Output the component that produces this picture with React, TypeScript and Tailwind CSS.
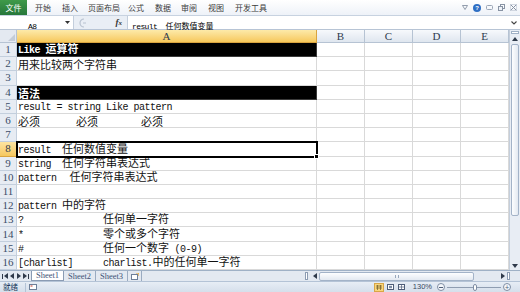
import React from "react";

const cellLatin = "font-['Liberation_Mono',monospace] text-[10px] tracking-[-0.5px] whitespace-pre leading-none";
const cellCjk = "font-['Noto_Sans_CJK_SC',sans-serif] text-[11px] leading-none";
const barLatin = "font-['Liberation_Mono',monospace] text-[8px] tracking-[-0.6px] whitespace-pre leading-none";
const barCjk = "font-['Noto_Sans_CJK_SC',sans-serif] text-[8px] leading-none";

// splits a string into ascii / cjk runs so each gets its own font
function Mixed({ text, bold, bar }: { text: string; bold?: boolean; bar?: boolean }) {
  const parts = text.split(/([\x00-\x7f]+)/).filter(Boolean);
  return (
    <span className="whitespace-nowrap">
      {parts.map((p, i) => {
        const latin = /^[\x00-\x7f]+$/.test(p);
        const base = bar ? (latin ? barLatin : barCjk) : latin ? cellLatin : cellCjk;
        return (
          <span key={i} className={`${base} ${bold ? "font-bold" : ""}`}>
            {p}
          </span>
        );
      })}
    </span>
  );
}

function Two({ a, b }: { a: string; b: string }) {
  return (
    <>
      <span className="inline-block w-[85px]">
        <Mixed text={a} />
      </span>
      <Mixed text={b} />
    </>
  );
}

const rows: { black?: boolean; content?: React.ReactNode }[] = [
  { black: true, content: <Mixed text="Like 运算符" bold /> },
  { content: <Mixed text="用来比较两个字符串" /> },
  {},
  { black: true, content: <Mixed text="语法" bold /> },
  { content: <Mixed text="result = string Like pattern" /> },
  {
    content: (
      <>
        <Mixed text="必须" />
        <span className="ml-[36px]"><Mixed text="必须" /></span>
        <span className="ml-[43px]"><Mixed text="必须" /></span>
      </>
    ),
  },
  {},
  { content: <Mixed text="result  任何数值变量" /> },
  { content: <Mixed text="string  任何字符串表达式" /> },
  {
    content: (
      <>
        <Mixed text="pattern" />
        <span className="ml-[13px]"><Mixed text="任何字符串表达式" /></span>
      </>
    ),
  },
  {},
  { content: <Mixed text="pattern 中的字符" /> },
  { content: <Two a="?" b="任何单一字符" /> },
  { content: <Two a="*" b="零个或多个字符" /> },
  { content: <Two a="#" b="任何一个数字 (0-9)" /> },
  { content: <Two a="[charlist]" b="charlist.中的任何单一字符" /> },
];

const menus = [
  { t: "开始", w: "w-[27px]" },
  { t: "插入", w: "w-[26px]" },
  { t: "页面布局", w: "w-[40px]" },
  { t: "公式", w: "w-[27px]" },
  { t: "数据", w: "w-[26px]" },
  { t: "审阅", w: "w-[27px]" },
  { t: "视图", w: "w-[27px]" },
  { t: "开发工具", w: "w-[40px]" },
];

function MenuBar() {
  return (
    <div className="flex h-[16px] shrink-0 items-stretch border-b border-[#c7d2e0] bg-gradient-to-b from-white to-[#eef2f8]">
      <div className="flex w-[27px] items-center justify-center bg-gradient-to-b from-[#3f9a4a] to-[#26773a] text-white">
        <span className="font-['Noto_Sans_CJK_SC',sans-serif] text-[8px] leading-none">文件</span>
      </div>
      <div className="ml-[8px] flex items-center text-[#3b3b3b]">
        {menus.map((m) => (
          <span key={m.t} className={`${m.w} font-['Noto_Sans_CJK_SC',sans-serif] text-[8px] leading-none`}>
            {m.t}
          </span>
        ))}
      </div>
      <div className="ml-auto mr-[3px] flex items-center gap-[5px]">
        <svg width="6" height="5" viewBox="0 0 6 5">
          <path d="M0.5 0.5 H5.5 L3 4.5 Z" fill="none" stroke="#7a8699" strokeWidth="0.8" />
        </svg>
        <div className="flex h-[8px] w-[8px] items-center justify-center rounded-full bg-[#2f6fc4] text-[6px] font-bold leading-none text-white font-['Liberation_Sans',sans-serif]">
          ?
        </div>
        <svg width="7" height="5" viewBox="0 0 7 5">
          <rect x="0.5" y="0.5" width="6" height="4" rx="1" fill="none" stroke="#9aa5b5" />
        </svg>
        <svg width="7" height="7" viewBox="0 0 7 7">
          <rect x="2.5" y="0.5" width="4" height="4" fill="none" stroke="#8893a4" />
          <rect x="0.5" y="2.5" width="4" height="4" fill="#eef2f8" stroke="#8893a4" />
        </svg>
        <svg width="7" height="7" viewBox="0 0 7 7">
          <path d="M1 1 L6 6 M6 1 L1 6" stroke="#8893a4" strokeWidth="1" />
          <rect x="0.3" y="0.3" width="6.4" height="6.4" fill="none" stroke="#b9c2cf" strokeWidth="0.6" />
        </svg>
      </div>
    </div>
  );
}

function FormulaBar() {
  return (
    <div className="flex h-[14px] shrink-0 items-stretch border-b border-[#b7c4d5] bg-[#e9eef5]">
      <div className="flex w-[74px] items-center border-r border-[#c3cedc] bg-white pl-[28px]">
        <Mixed text="A8" bar />
        <svg className="ml-auto mr-[3px]" width="5" height="3" viewBox="0 0 5 3">
          <path d="M0 0 H5 L2.5 3 Z" fill="#333" />
        </svg>
      </div>
      <div className="flex w-[53px] items-center">
        <svg className="ml-[4px]" width="9" height="10" viewBox="0 0 9 10">
          <path d="M6 1 A4 4 0 0 0 6 9" fill="none" stroke="#b8c2d0" strokeWidth="1.2" />
          <path d="M5 5 H8" stroke="#b8c2d0" strokeWidth="1" />
        </svg>
        <span className="ml-auto mr-[5px] font-['Liberation_Serif',serif] text-[9px] font-bold italic leading-none text-[#333]">
          f<span className="text-[7px]">x</span>
        </span>
      </div>
      <div className="flex flex-1 items-center border-l border-[#c3cedc] bg-white pl-[4px] text-black">
        <Mixed text="result  任何数值变量" bar />
        <svg className="ml-auto mr-[3px]" width="6" height="4" viewBox="0 0 6 4">
          <path d="M0.5 0.5 L3 3 L5.5 0.5" fill="none" stroke="#444" strokeWidth="1.1" />
        </svg>
      </div>
    </div>
  );
}

const headCell =
  "flex items-center justify-center border-r border-b border-[#b6c3d3] bg-gradient-to-b from-[#f7f9fc] to-[#dfe6ef] font-['Liberation_Serif',serif] text-[11px] leading-none text-[#2e3b4f]";

function HeaderRow() {
  return (
    <div className="flex h-[13px] shrink-0">
      <div className="flex w-[17px] shrink-0 items-end justify-end border-r border-b border-[#b6c3d3] bg-[#e4e9f1] p-[1px]">
        <svg width="7" height="7" viewBox="0 0 7 7">
          <path d="M7 0 V7 H0 Z" fill="#c3ccd8" />
        </svg>
      </div>
      <div className="flex w-[300px] shrink-0 items-center justify-center border-r border-b border-[#d9a43f] bg-gradient-to-b from-[#fdeaa9] to-[#f6c85a] font-['Liberation_Serif',serif] text-[11px] leading-none text-[#2e3b4f]">
        A
      </div>
      {["B", "C", "D", "E"].map((c) => (
        <div key={c} className={`w-[48px] shrink-0 ${headCell}`}>
          {c}
        </div>
      ))}
    </div>
  );
}

function GridRow({ n, black, content }: { n: number; black?: boolean; content?: React.ReactNode }) {
  const sel = n === 8;
  return (
    <div className="flex h-[14.2px] shrink-0">
      <div
        className={`flex w-[17px] shrink-0 items-center justify-center border-r border-b font-['Liberation_Serif',serif] text-[11px] leading-none ${
          sel
            ? "border-[#d9a43f] bg-gradient-to-b from-[#fde4a0] to-[#f5c75e] text-[#2e3b4f]"
            : "border-[#c3cfdd] bg-[#e7ecf3] text-[#3b4c68]"
        }`}
      >
        {n}
      </div>
      <div
        className={`flex w-[300px] shrink-0 items-end border-r border-b pl-[1px] ${
          black ? "border-[#3a3a3a] bg-black text-white" : "border-[#d9d9d9] bg-white text-[#111]"
        } ${sel ? "relative outline-2 -outline-offset-1 outline-black" : ""}`}
      >
        <div className="whitespace-nowrap leading-[12px]">{content}</div>
        {sel && <div className="absolute right-[-3px] bottom-[-3px] h-[5px] w-[5px] border border-white bg-black" />}
      </div>
      {[0, 1, 2, 3].map((i) => (
        <div key={i} className="w-[48px] shrink-0 border-r border-b border-[#d9d9d9] bg-white" />
      ))}
    </div>
  );
}

function Arrow({ dir }: { dir: "up" | "down" | "left" | "right" }) {
  const d = {
    up: "M0 4 L3 0 L6 4 Z",
    down: "M0 0 L6 0 L3 4 Z",
    left: "M4 0 L4 6 L0 3 Z",
    right: "M0 0 L0 6 L4 3 Z",
  }[dir];
  const vert = dir === "up" || dir === "down";
  return (
    <svg width={vert ? 6 : 4} height={vert ? 4 : 6} viewBox={vert ? "0 0 6 4" : "0 0 4 6"}>
      <path d={d} fill="#2f3a4a" />
    </svg>
  );
}

function VScroll() {
  return (
    <div className="flex w-[11px] shrink-0 flex-col border-l border-[#c4cedb] bg-[#e8edf4]">
      <div className="mx-[1px] mt-[1px] h-[3px] border border-[#9fb0c5] bg-white" />
      <div className="flex h-[10px] items-center justify-center">
        <Arrow dir="up" />
      </div>
      <div className="mx-[1px] h-[172px] rounded-[2px] border border-[#a3b3c8] bg-gradient-to-r from-[#fdfeff] to-[#e3e9f1]" />
      <div className="flex-1" />
      <div className="flex h-[9px] items-center justify-center">
        <Arrow dir="down" />
      </div>
    </div>
  );
}

function SheetBar() {
  const tabText = "font-['Liberation_Serif',serif] text-[8.5px] leading-none text-[#3f5276]";
  return (
    <div className="flex h-[11px] shrink-0 items-stretch border-t border-[#9fb1c6] bg-[#e3e9f1]">
      <div className="flex w-[31px] items-center justify-around px-[1px]">
        <span className="flex items-center">
          <span className="mr-[1px] h-[5px] w-[1px] bg-[#2f3a4a]" />
          <Arrow dir="left" />
        </span>
        <Arrow dir="left" />
        <Arrow dir="right" />
        <span className="flex items-center">
          <Arrow dir="right" />
          <span className="ml-[1px] h-[5px] w-[1px] bg-[#2f3a4a]" />
        </span>
      </div>
      <div className="flex items-start">
        <div className={`flex h-[10px] w-[33px] items-center justify-center border-x border-b border-[#8a9bb3] bg-white ${tabText}`}>
          Sheet1
        </div>
        <div className={`flex h-[10px] w-[32px] items-center justify-center border-r border-[#9aabc1] ${tabText}`}>
          Sheet2
        </div>
        <div className={`flex h-[10px] w-[32px] items-center justify-center border-r border-[#9aabc1] ${tabText}`}>
          Sheet3
        </div>
        <div className="flex h-[10px] w-[14px] items-center justify-center border-r border-[#9aabc1]">
          <svg width="8" height="7" viewBox="0 0 8 7">
            <rect x="0.5" y="1.5" width="6" height="5" fill="#fff" stroke="#6d7f99" />
            <path d="M5 0 L8 0 L8 3" fill="none" stroke="#e5a532" strokeWidth="1.2" />
          </svg>
        </div>
      </div>
      <div className="ml-auto flex w-[215px] items-center">
        <div className="h-[8px] w-[3px] border border-[#8c9cb2] bg-white" />
        <div className="ml-[3px] flex w-[8px] items-center justify-center">
          <Arrow dir="left" />
        </div>
        <div className="flex h-[9px] w-[155px] items-center justify-center rounded-[2px] border border-[#a3b3c8] bg-gradient-to-b from-[#fdfeff] to-[#e3e9f1]">
          <span className="h-[3px] w-[4px] border-x border-[#98a8bd]" />
        </div>
        <div className="flex-1" />
        <div className="flex w-[8px] items-center justify-center">
          <Arrow dir="right" />
        </div>
        <div className="mr-[10px] h-[8px] w-[3px] border border-[#8c9cb2] bg-white" />
      </div>
    </div>
  );
}

function StatusBar() {
  return (
    <div className="flex h-[11px] shrink-0 items-center border-t border-[#b4c3d6] bg-gradient-to-b from-[#e7edf5] to-[#d5dfeb]">
      <span className="ml-[3px] font-['Noto_Sans_CJK_SC',sans-serif] text-[7.5px] leading-none text-[#203a5c]">就绪</span>
      <div className="ml-[7px] h-[9px] w-[1px] bg-[#b4c3d6]" />
      <svg className="ml-[3px]" width="8" height="6" viewBox="0 0 8 6">
        <rect x="0.5" y="0.5" width="7" height="5" fill="#fff" stroke="#6d7f99" />
        <rect x="1.5" y="1.5" width="2" height="1" fill="#c0392b" />
      </svg>
      <div className="ml-auto flex items-center">
        <div className="flex h-[9px] w-[10px] items-center justify-center border border-[#d8a646] bg-[#f9d67c]">
          <svg width="6" height="5" viewBox="0 0 6 5">
            <path d="M0 1 H6 M0 3 H6 M1.5 0 V5 M4.5 0 V5" stroke="#6b5a2a" strokeWidth="0.7" />
          </svg>
        </div>
        <div className="ml-[2px] flex h-[9px] w-[9px] items-center justify-center">
          <svg width="7" height="6" viewBox="0 0 7 6">
            <rect x="0.5" y="0.5" width="6" height="5" fill="#fff" stroke="#4d5d78" />
            <rect x="2" y="1.8" width="3" height="2.4" fill="#7d8ca5" />
          </svg>
        </div>
        <div className="ml-[2px] flex h-[9px] w-[9px] items-center justify-center">
          <svg width="7" height="6" viewBox="0 0 7 6">
            <rect x="0.5" y="0.5" width="6" height="5" fill="#fff" stroke="#4d5d78" />
            <path d="M3.5 0.5 V5.5 M0.5 3 H6.5" stroke="#4d5d78" strokeWidth="0.7" />
          </svg>
        </div>
        <span className="ml-[7px] font-['Liberation_Sans',sans-serif] text-[7.5px] leading-none text-[#3a4a62]">130%</span>
        <div className="ml-[5px] flex h-[8px] w-[8px] items-center justify-center rounded-full border border-[#7f8ea4] bg-[#f4f7fb]">
          <span className="h-[1px] w-[4px] bg-[#4d5d78]" />
        </div>
        <div className="relative mx-[2px] flex h-[9px] w-[54px] items-center">
          <div className="h-[1px] w-full bg-[#8f9db1]" />
          <div className="absolute left-[26px] top-[1px] h-[7px] w-[4px] rounded-[2px] border border-[#7f8ea4] bg-white" />
        </div>
        <div className="mr-[9px] flex h-[8px] w-[8px] items-center justify-center rounded-full border border-[#7f8ea4] bg-[#f4f7fb] text-[7px] leading-none text-[#4d5d78] font-['Liberation_Sans',sans-serif]">
          +
        </div>
      </div>
    </div>
  );
}

export default function App() {
  return (
    <div className="flex h-[292px] w-[520px] flex-col overflow-hidden bg-white">
      <MenuBar />
      <FormulaBar />
      <div className="flex min-h-0 flex-1">
        <div className="flex w-[509px] shrink-0 flex-col overflow-hidden">
          <HeaderRow />
          {rows.map((r, i) => (
            <GridRow key={i} n={i + 1} black={r.black} content={r.content} />
          ))}
        </div>
        <VScroll />
      </div>
      <SheetBar />
      <StatusBar />
    </div>
  );
}
